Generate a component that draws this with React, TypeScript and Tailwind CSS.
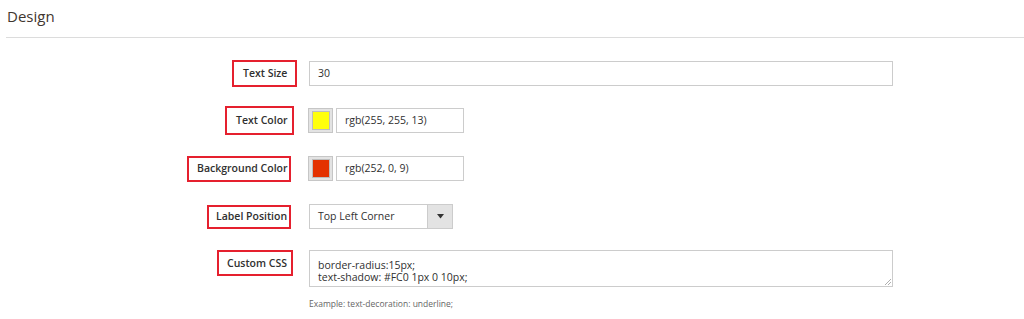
const font = { fontFamily: '"Open Sans", "Liberation Sans", sans-serif' };

function Label({ text, mr, w, pl, h }: { text: string; mr: string; w: string; pl: string; h: string }) {
  return (
    <div className="w-[297px] shrink-0 flex justify-end items-center h-full">
      <span
        className={`flex items-center whitespace-nowrap border-2 border-[#e5202e] text-[10.5px] font-semibold text-[#303030] leading-none ${mr} ${w} ${pl} ${h}`}
      >
        {text}
      </span>
    </div>
  );
}

function Swatch({ color }: { color: string }) {
  return (
    <div className="w-[25px] h-[25px] bg-[#e3e3e3] border border-[#c6c6c6] flex items-center justify-center">
      <div className="w-[18px] h-[19px] border border-[#bdbdbd]" style={{ background: color }} />
    </div>
  );
}

export default function App() {
  return (
    <div className="w-[1024px] h-[319px] bg-white overflow-hidden text-[#303030]" style={font}>
      <div className="pl-[7px] pt-[4px] h-[37px]">
        <h2 className="text-[15px] font-normal text-[#41362f] leading-[24px]">Design</h2>
      </div>
      <div className="ml-[6px] border-t border-[#dcdcdc]" />

      <div className="flex flex-col">
        <div className="flex items-center h-[25px] mt-[23px]">
          <Label text="Text Size" mr="mr-0" w="w-[65px]" pl="pl-[9px]" h="h-[27px]" />
          <div className="ml-[12px] w-[584px] h-[25px] border border-[#cccccc] flex items-center pl-[8px] text-[10.5px] text-[#303030]">
            30
          </div>
        </div>

        <div className="flex items-center h-[25px] mt-[22px]">
          <Label text="Text Color" mr="mr-[3px]" w="w-[69px]" pl="pl-[9px]" h="h-[29px]" />
          <div className="ml-[11px] flex gap-[3px]">
            <Swatch color="#ffff0d" />
            <div className="w-[128px] h-[25px] border border-[#cccccc] flex items-center pl-[8px] text-[10.5px]">
              rgb(255, 255, 13)
            </div>
          </div>
        </div>

        <div className="flex items-center h-[25px] mt-[23px]">
          <Label text="Background Color" mr="mr-[6px]" w="w-[104px]" pl="pl-[8px]" h="h-[26px]" />
          <div className="ml-[11px] flex gap-[3px]">
            <Swatch color="#e43100" />
            <div className="w-[128px] h-[25px] border border-[#cccccc] flex items-center pl-[8px] text-[10.5px]">
              rgb(252, 0, 9)
            </div>
          </div>
        </div>

        <div className="flex items-center h-[25px] mt-[23px]">
          <Label text="Label Position" mr="mr-[6px]" w="w-[84px]" pl="pl-[7px]" h="h-[24px]" />
          <div className="ml-[12px] w-[144px] h-[25px] border border-[#cccccc] flex">
            <div className="flex-1 flex items-center pl-[8px] text-[10.5px]">Top Left Corner</div>
            <div className="w-[25px] h-full bg-[#e3e3e3] border-l border-[#cccccc] flex items-center justify-center">
              <svg width="7" height="5" viewBox="0 0 7 5">
                <path d="M0 0 H7 L3.5 4.5 Z" fill="#333" />
              </svg>
            </div>
          </div>
        </div>

        <div className="flex items-start mt-[21px]">
          <div className="w-[297px] shrink-0 flex justify-end">
            <span className="flex items-center whitespace-nowrap border-2 border-[#e5202e] text-[10.5px] font-semibold text-[#303030] leading-none mr-[4px] w-[76px] pl-[8px] h-[26px]">
              Custom CSS
            </span>
          </div>
          <div className="ml-[12px] flex flex-col">
            <div className="relative w-[584px] h-[37px] border border-[#cccccc] pl-[8px] pt-[8px] text-[10.5px] leading-[12px]">
              <div>border-radius:15px;</div>
              <div>text-shadow: #FC0 1px 0 10px;</div>
              <svg className="absolute right-[1px] bottom-[1px]" width="7" height="7" viewBox="0 0 7 7">
                <path d="M1 7 L7 1 M4 7 L7 4" stroke="#9a9a9a" strokeWidth="0.8" />
              </svg>
            </div>
            <div className="mt-[13px] text-[8.5px] text-[#666666] leading-none">
              Example: text-decoration: underline;
            </div>
          </div>
        </div>
      </div>
    </div>
  );
}
